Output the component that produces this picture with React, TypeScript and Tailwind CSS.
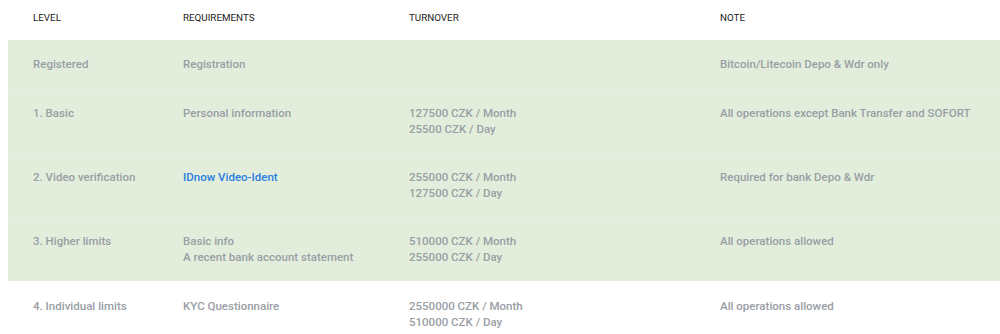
const rows = [
  {
    level: "Registered",
    req: ["Registration"],
    turnover: [],
    note: "Bitcoin/Litecoin Depo & Wdr only",
    green: true,
  },
  {
    level: "1. Basic",
    req: ["Personal information"],
    turnover: ["127500 CZK / Month", "25500 CZK / Day"],
    note: "All operations except Bank Transfer and SOFORT",
    green: true,
  },
  {
    level: "2. Video verification",
    req: ["IDnow Video-Ident"],
    link: true,
    turnover: ["255000 CZK / Month", "127500 CZK / Day"],
    note: "Required for bank Depo & Wdr",
    green: true,
  },
  {
    level: "3. Higher limits",
    req: ["Basic info", "A recent bank account statement"],
    turnover: ["510000 CZK / Month", "255000 CZK / Day"],
    note: "All operations allowed",
    green: true,
  },
  {
    level: "4. Individual limits",
    req: ["KYC Questionnaire"],
    turnover: ["2550000 CZK / Month", "510000 CZK / Day", "No limit for Bitcoin Depo and Wdr"],
    note: "All operations allowed",
    green: false,
  },
];

const cols = "grid grid-cols-[150px_226px_311px_1fr]";

export default function App() {
  return (
    <div className="w-[1000px] h-[334px] overflow-hidden bg-white pl-2 font-['Roboto',sans-serif] text-[11.5px] leading-4">
      <div className={`${cols} h-10 items-center pb-1 text-[9.8px] uppercase text-[#222]`}>
        <div className="pl-[25px]">Level</div>
        <div className="pl-[25px]">Requirements</div>
        <div className="pl-[25px]">Turnover</div>
        <div className="pl-[25px]">Note</div>
      </div>
      {rows.map((r, i) => (
        <div
          key={i}
          className={`${cols} font-medium text-[#999ea5] ${
            r.green ? "bg-[#e2eedb]" : "bg-white"
          } ${
            i === 0
              ? "pt-4 pb-[17px]"
              : r.green
                ? "border-t border-[#e8f2e3] pt-[15px] pb-4"
                : "pt-[17px] pb-4"
          }`}
        >
          <div className="pl-[25px]">{r.level}</div>
          <div className="pl-[25px]">
            {r.req.map((t) => (
              <div key={t} className={r.link ? "text-[#2a7de1]" : ""}>
                {t}
              </div>
            ))}
          </div>
          <div className="pl-[25px]">
            {r.turnover.map((t, j) => (
              <div key={t} className={j === 2 ? "text-[#2a7de1]" : ""}>
                {t}
              </div>
            ))}
          </div>
          <div className="pl-[25px]">{r.note}</div>
        </div>
      ))}
    </div>
  );
}
